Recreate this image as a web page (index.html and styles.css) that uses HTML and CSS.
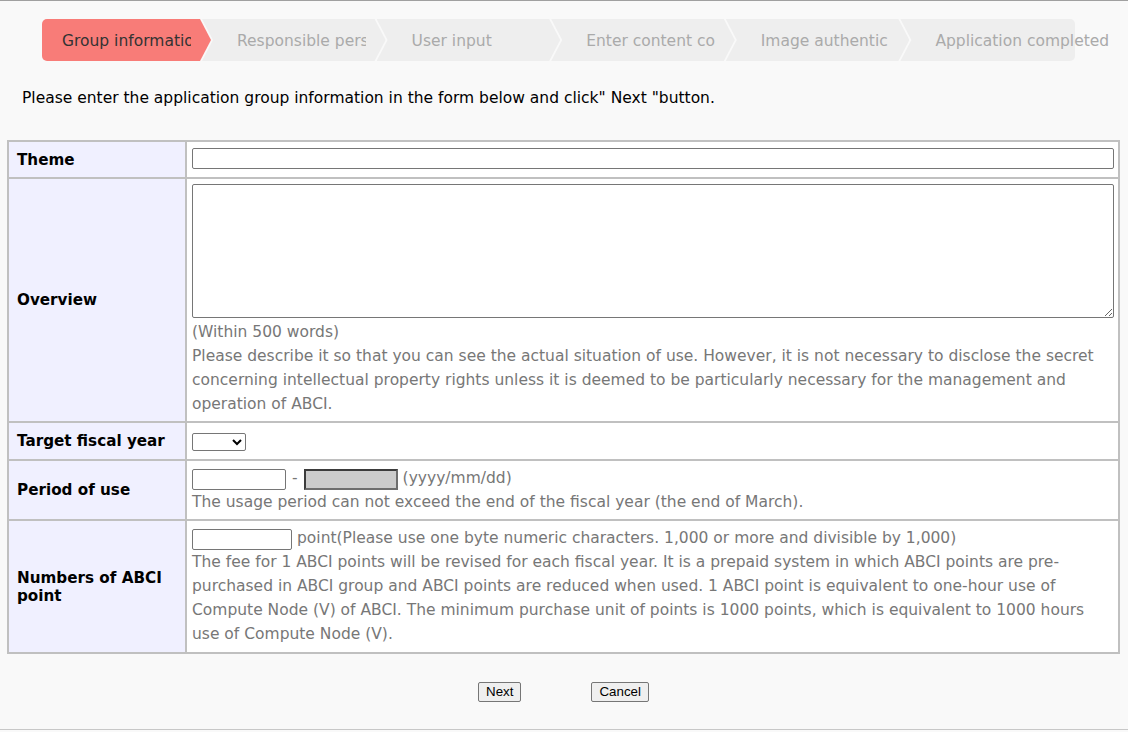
FILE: index.html
```html
<!DOCTYPE html>
<html>
<head>
<meta charset="utf-8">
<link rel="stylesheet" href="styles.css">
</head>
<body>
<div class="page">
  <div class="steps">
    <div class="step step-first active"><span class="step-text">Group information</span></div>
    <div class="step"><span class="step-text">Responsible person</span></div>
    <div class="step"><span class="step-text">User input</span></div>
    <div class="step"><span class="step-text">Enter content confirmation</span></div>
    <div class="step"><span class="step-text step-text-narrow">Image authentication</span></div>
    <div class="step step-last"><span class="step-text">Application completed</span></div>
  </div>

  <p class="intro">Please enter the application group information in the form below and click" Next "button.</p>

  <table class="form-table">
    <tr class="row-theme">
      <th>Theme</th>
      <td><input type="text" class="input-full"></td>
    </tr>
    <tr>
      <th>Overview</th>
      <td>
        <textarea class="textarea-full"></textarea>
        <div class="note">(Within 500 words)<br>Please describe it so that you can see the actual situation of use. However, it is not necessary to disclose the secret concerning intellectual property rights unless it is deemed to be particularly necessary for the management and operation of ABCI.</div>
      </td>
    </tr>
    <tr>
      <th>Target fiscal year</th>
      <td><select class="year-select"><option></option></select></td>
    </tr>
    <tr>
      <th>Period of use</th>
      <td>
        <div class="line line-period">
          <input type="text" class="input-date">
          <span class="dash">-</span>
          <input type="text" class="input-date input-disabled" disabled>
          <span class="note">(yyyy/mm/dd)</span>
        </div>
        <div class="note">The usage period can not exceed the end of the fiscal year (the end of March).</div>
      </td>
    </tr>
    <tr>
      <th>Numbers of ABCI point</th>
      <td class="cell-points">
        <div class="line">
          <input type="text" class="input-point">
          <span class="note">point(Please use one byte numeric characters. 1,000 or more and divisible by 1,000)</span>
        </div>
        <div class="note">The fee for 1 ABCI points will be revised for each fiscal year. It is a prepaid system in which ABCI points are pre-purchased in ABCI group and ABCI points are reduced when used. 1 ABCI point is equivalent to one-hour use of Compute Node (V) of ABCI. The minimum purchase unit of points is 1000 points, which is equivalent to 1000 hours use of Compute Node (V).</div>
      </td>
    </tr>
  </table>

  <div class="buttons">
    <button type="button" class="btn">Next</button>
    <button type="button" class="btn">Cancel</button>
  </div>
</div>
</body>
</html>
```

FILE: styles.css
```css
html, body {
  margin: 0;
  padding: 0;
  background: #f9f9f9;
}

body {
  font-family: "DejaVu Sans", Verdana, sans-serif;
  color: #000;
}

.page {
  height: 728px;
  border-top: 1px solid #a0a0a0;
  border-bottom: 1px solid #c8c8c8;
  padding: 0 8px 0 7px;
  box-sizing: content-box;
}

/* ---------- steps ---------- */
.steps {
  display: flex;
  margin: 18px 0 0 35px;
  width: 1033px;
  height: 42px;
}

.step {
  position: relative;
  flex: 0 0 183.6px;
  min-width: 0;
  margin-left: -9px;
  height: 42px;
  background: #eeeeee;
  color: #aaaaaa;
  font-size: 15.5px;
  padding: 3px 0 0 35px;
  box-sizing: border-box;
  clip-path: polygon(0 0, calc(100% - 11px) 0, 100% 50%, calc(100% - 11px) 100%, 0 100%, 11px 50%);
}

.step-first {
  flex-basis: 169px;
  margin-left: 0;
  padding-left: 20px;
  border-radius: 5px 0 0 5px;
  clip-path: polygon(0 0, calc(100% - 11px) 0, 100% 50%, calc(100% - 11px) 100%, 0 100%);
}

.step-last {
  flex-basis: 174.6px;
  border-radius: 0 5px 5px 0;
  clip-path: polygon(0 0, 200% 0, 200% 100%, 0 100%, 11px 50%);
}

.step.active {
  background: #f87c78;
  color: #333333;
}

.step-text {
  display: block;
  width: 129px;
  height: 38px;
  line-height: 38px;
  overflow: hidden;
  white-space: nowrap;
}

.step-text-narrow {
  width: 127px;
}

.step-last .step-text {
  overflow: visible;
  width: auto;
}

/* ---------- intro ---------- */
.intro {
  margin: 27px 0 0 15px;
  font-size: 15.5px;
  line-height: 20px;
}

/* ---------- table ---------- */
.form-table {
  width: 100%;
  margin-top: 32px;
  border-collapse: collapse;
  border: 2px solid #c0c0c0;
  background: #ffffff;
  font-size: 15.5px;
}

.form-table th,
.form-table td {
  border: 2px solid #c0c0c0;
}

.form-table th {
  width: 162px;
  padding: 0 6px 0 8px;
  background: #f0f0ff;
  text-align: left;
  font-weight: bold;
  font-size: 15.2px;
  line-height: 18px;
  vertical-align: middle;
}

.form-table td {
  padding: 3px 4px 5px 5px;
  line-height: 24px;
  vertical-align: top;
}

.form-table td.cell-points {
  padding-top: 5px;
  padding-bottom: 6px;
}

.note {
  color: #777777;
}

input, textarea, select {
  font-family: "Liberation Sans", Arial, sans-serif;
  font-size: 13.33px;
  box-sizing: border-box;
  background: #ffffff;
  border: 1px solid #767676;
  border-radius: 2px;
  margin: 0;
}

.input-full {
  display: block;
  width: 100%;
  height: 21px;
  margin: 3px 0;
}

.textarea-full {
  display: block;
  width: 100%;
  height: 134px;
  margin: 2px 0 2px;
  resize: vertical;
}

.year-select {
  display: block;
  width: 54px;
  height: 18px;
  margin: 7px 0 3px;
  padding: 0;
}

.line {
  display: flex;
  align-items: flex-end;
  height: 24px;
  white-space: nowrap;
}

.line-period {
  height: 26px;
}

.input-date {
  width: 94px;
  height: 21px;
}

.input-disabled {
  width: 94px;
  background: #cccccc;
  border: 2px solid;
  border-color: #3c3c3c #6e6e6e #6e6e6e #3c3c3c;
  border-radius: 0;
}

.dash {
  color: #777777;
  padding: 0 6px 0 6px;
}

.line .note {
  margin-left: 5px;
}

.input-point {
  width: 100px;
  height: 21px;
}

/* ---------- buttons ---------- */
.buttons {
  display: flex;
  justify-content: center;
  gap: 70px;
  margin-top: 28px;
}

.btn {
  font-family: "Liberation Sans", Arial, sans-serif;
  font-size: 13.33px;
  height: 20px;
  padding: 0 7px;
  background: #efefef;
  color: #000;
  border: 1px solid #767676;
  border-radius: 2px;
  line-height: 18px;
}
```
